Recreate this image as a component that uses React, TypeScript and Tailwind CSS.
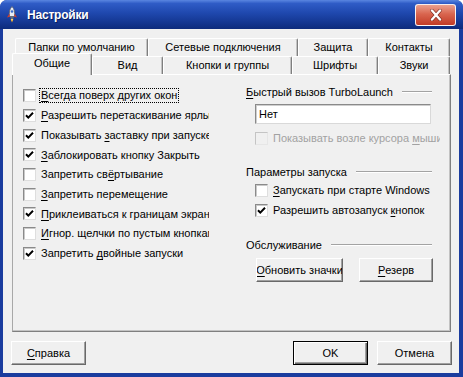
import React from "react";

type Parts = [string, string, string];

const Mn = ({ parts }: { parts: Parts }) => (
  <>
    {parts[0]}
    <span className="underline underline-offset-[2px]">{parts[1]}</span>
    {parts[2]}
  </>
);

const Box = ({ checked, disabled }: { checked?: boolean; disabled?: boolean }) => (
  <span
    className={
      disabled
        ? "w-[13px] h-[13px] shrink-0 border border-t-[#c4c4c4] border-l-[#c4c4c4] border-r-[#e6e6e6] border-b-[#e6e6e6] bg-[#f0f0f0]"
        : "w-[13px] h-[13px] shrink-0 flex items-center justify-center border border-t-[#8a8a8a] border-l-[#8a8a8a] border-r-[#dedede] border-b-[#dedede] bg-white shadow-[inset_1px_1px_0_#c9c9c9]"
    }
  >
    {checked && (
      <svg width="11" height="11" viewBox="0 0 11 11">
        <path d="M2 5.2 L4.3 7.6 L9 2.8" fill="none" stroke="#000" strokeWidth="2" />
      </svg>
    )}
  </span>
);

const leftItems: { parts: Parts; checked: boolean; focus?: boolean }[] = [
  { parts: ["", "В", "сегда поверх других окон"], checked: false, focus: true },
  { parts: ["", "Р", "азрешить перетаскивание ярлыков"], checked: true },
  { parts: ["Показывать ", "з", "аставку при запуске"], checked: true },
  { parts: ["", "З", "аблокировать кнопку Закрыть"], checked: true },
  { parts: ["Запретить св", "ё", "ртывание"], checked: false },
  { parts: ["", "З", "апретить перемещение"], checked: false },
  { parts: ["", "П", "риклеиваться к границам экрана"], checked: true },
  { parts: ["", "И", "гнор. щелчки по пустым кнопкам"], checked: false },
  { parts: ["Запретить ", "д", "войные запуски"], checked: true },
];

const backTabs = [
  { label: "Папки по умолчанию", w: "w-[133px]" },
  { label: "Сетевые подключения", w: "w-[150px]" },
  { label: "Защита", w: "w-[70px]" },
  { label: "Контакты", w: "w-[82px]" },
];

const frontTabs = [
  { label: "Вид", w: "w-[71px]" },
  { label: "Кнопки и группы", w: "w-[129px]" },
  { label: "Шрифты", w: "w-[86px]" },
  { label: "Звуки", w: "w-[72px]" },
];

const tabCls =
  "h-full flex items-center justify-center whitespace-nowrap bg-[#f0f0f0] border-t border-l border-r border-t-white border-l-white border-r-[#7f7f7f] rounded-t-[2px] shadow-[inset_-1px_0_0_#c3c3c3]";

const btnCls =
  "h-[24px] flex items-center justify-center whitespace-nowrap overflow-hidden bg-[#f0f0f0] border-t border-l border-r border-b border-t-white border-l-white border-r-[#696969] border-b-[#696969] shadow-[inset_-1px_-1px_0_#a0a0a0]";

const Heading = ({ children }: { children: React.ReactNode }) => (
  <div className="h-[12px] mr-[8px] flex items-center gap-[9px] whitespace-nowrap">
    <span>{children}</span>
    <span className="flex-1 h-[2px] border-t border-b border-t-[#a3a3a3] border-b-white" />
  </div>
);

const RocketIcon = () => (
  <svg width="14" height="17" viewBox="0 0 14 17">
    <path d="M7 0.5 C9.5 3 10 6 9.6 10.5 L4.4 10.5 C4 6 4.5 3 7 0.5 Z" fill="#e9ecf2" stroke="#5a5f6a" strokeWidth="0.8" />
    <circle cx="7" cy="5.5" r="1.3" fill="#3a6fd0" />
    <path d="M4.4 7.5 L2 11.5 L4.6 10.8 Z" fill="#d63a28" />
    <path d="M9.6 7.5 L12 11.5 L9.4 10.8 Z" fill="#d63a28" />
    <path d="M5.2 11 L8.8 11 L8 13 L6 13 Z" fill="#6b6f78" />
    <path d="M5.6 13 L8.4 13 L7 16.5 Z" fill="#ffb020" />
    <path d="M6.3 13 L7.7 13 L7 15 Z" fill="#fff2a0" />
  </svg>
);

export default function App() {
  return (
    <div className="w-[463px] h-[377px] bg-white font-['Liberation_Sans',Arial,sans-serif] text-[11px] text-black">
      <div className="w-full h-full flex flex-col rounded-t-[7px] overflow-hidden bg-[#1a3c9e]">
        {/* title bar */}
        <div className="h-[29px] shrink-0 flex items-center pl-[5px] pr-[7px] bg-[linear-gradient(to_bottom,#5a86e0_0%,#2f5cc6_12%,#1f48ae_45%,#13358f_80%,#0d2b7c_100%)]">
          <RocketIcon />
          <span className="ml-[8px] text-[12px] tracking-[-0.2px] font-bold text-white [text-shadow:1px_1px_0_#0a1f5e]">Настройки</span>
          <div className="ml-auto w-[41px] h-[22px] rounded-[3px] border border-white/90 bg-[linear-gradient(to_bottom,#eaa08e_0%,#d9654f_45%,#c23b26_100%)] flex items-center justify-center">
            <svg width="14" height="12" viewBox="0 0 14 12">
              <path d="M3 1.5 L11 10.5 M11 1.5 L3 10.5" stroke="#7a2a1e" strokeWidth="3.4" strokeLinecap="round" />
              <path d="M3 1.5 L11 10.5 M11 1.5 L3 10.5" stroke="#ffffff" strokeWidth="2.4" strokeLinecap="round" />
            </svg>
          </div>
        </div>

        {/* client area */}
        <div className="flex-1 ml-[3px] mr-[4px] mb-[4px] bg-[#f0f0f0] flex flex-col pt-[9px] pl-[9px]">
          {/* back tab row */}
          <div className="flex h-[18px] pl-[3px]">
            {backTabs.map((t) => (
              <div key={t.label} className={`${tabCls} ${t.w}`}>
                {t.label}
              </div>
            ))}
          </div>
          {/* front tab row */}
          <div className="flex items-end h-[18px]">
            <div className="relative z-10 w-[80px] h-[22px] -mb-px flex items-center justify-center pb-[2px] bg-[#f0f0f0] border-t border-l border-r border-t-white border-l-white border-r-[#7f7f7f] rounded-t-[2px] shadow-[inset_-1px_0_0_#c3c3c3]">
              Общие
            </div>
            {frontTabs.map((t) => (
              <div key={t.label} className={`${tabCls} ${t.w}`}>
                {t.label}
              </div>
            ))}
          </div>

          {/* panel */}
          <div className="w-[439px] h-[258px] flex pt-[11px] pl-[10px] border-t border-l border-r border-b border-t-white border-l-[#a8a8a8] border-r-[#7f7f7f] border-b-[#7f7f7f] shadow-[inset_-1px_-1px_0_#c3c3c3]">
            <div className="w-[186px] shrink-0 flex flex-col overflow-hidden">
              {leftItems.map((it, i) => (
                <div key={i} className="h-[19.7px] flex items-center gap-[5px] overflow-hidden whitespace-nowrap">
                  <Box checked={it.checked} />
                  {it.focus ? (
                    <span className="-ml-[2px] h-[15px] px-[1px] leading-[13px] border border-dotted border-black">
                      <Mn parts={it.parts} />
                    </span>
                  ) : (
                    <span>
                      <Mn parts={it.parts} />
                    </span>
                  )}
                </div>
              ))}
            </div>

            <div className="ml-[37px] w-[194px] shrink-0 flex flex-col overflow-hidden">
              <Heading>
                <Mn parts={["", "Б", "ыстрый вызов TurboLaunch"]} />
              </Heading>
              <div className="mt-[6px] ml-[9px] w-[176px] h-[20px] flex items-center pl-[3px] bg-white border-t border-l border-r border-b border-t-[#8a8a8a] border-l-[#8a8a8a] border-r-[#d9d9d9] border-b-[#d9d9d9] shadow-[inset_1px_1px_0_#cfcfcf]">
                Нет
              </div>
              <div className="mt-[7px] ml-[9px] h-[14px] flex items-center gap-[5px] whitespace-nowrap text-[#a2a2a2]">
                <Box disabled />
                <span>
                  <Mn parts={["Показывать возле курсора ", "м", "ыши"]} />
                </span>
              </div>

              <div className="mt-[21px]">
                <Heading>Параметры запуска</Heading>
              </div>
              <div className="mt-[5px] ml-[9px] h-[14px] flex items-center gap-[5px] whitespace-nowrap">
                <Box />
                <span>
                  <Mn parts={["", "З", "апускать при старте Windows"]} />
                </span>
              </div>
              <div className="mt-[6px] ml-[9px] h-[14px] flex items-center gap-[5px] whitespace-nowrap">
                <Box checked />
                <span>
                  <Mn parts={["Разрешить автозапуск ", "к", "нопок"]} />
                </span>
              </div>

              <div className="mt-[22px]">
                <Heading>Обслуживание</Heading>
              </div>
              <div className="mt-[7px] flex">
                <div className={`${btnCls} ml-[10px] w-[87px]`}>
                  <Mn parts={["", "О", "бновить значки"]} />
                </div>
                <div className={`${btnCls} ml-[16px] w-[74px]`}>
                  <Mn parts={["", "Р", "езерв"]} />
                </div>
              </div>
            </div>
          </div>

          {/* bottom buttons */}
          <div className="mt-[9px] -ml-px w-[441px] flex">
            <div className={`${btnCls} w-[75px]`}>
              <Mn parts={["", "С", "правка"]} />
            </div>
            <div className="ml-auto w-[75px] h-[24px] flex items-center justify-center bg-[#f0f0f0] border border-black shadow-[inset_1px_1px_0_#fff,inset_-1px_-1px_0_#696969,inset_-2px_-2px_0_#a0a0a0]">
              OK
            </div>
            <div className={`${btnCls} ml-[9px] w-[75px]`}>Отмена</div>
          </div>
        </div>
      </div>
    </div>
  );
}
